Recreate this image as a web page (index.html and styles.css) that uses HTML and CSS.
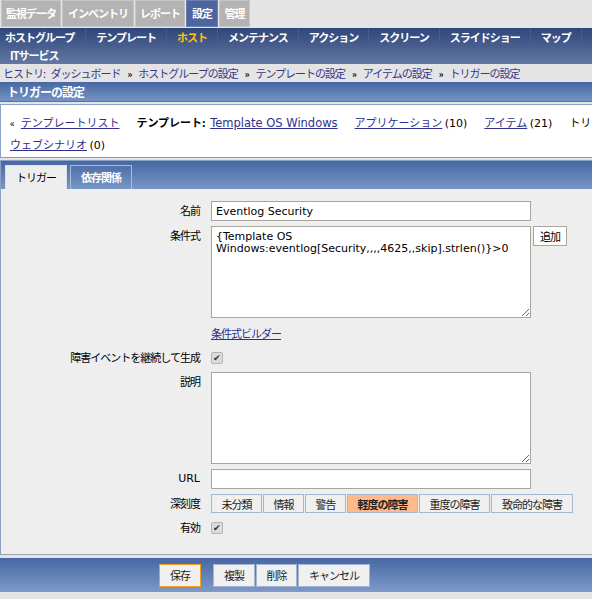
FILE: index.html
```html
<!DOCTYPE html>
<html lang="ja">
<head>
  <meta charset="UTF-8" />
  <title>トリガーの設定</title>
  <link rel="stylesheet" href="styles.css">
</head>
<body>

<div class="top-tabs">
  <span class="top-tab t1">監視データ</span>
  <span class="top-tab t2">インベントリ</span>
  <span class="top-tab t3">レポート</span>
  <span class="top-tab t4 activo">設定</span>
  <span class="top-tab t5">管理</span>
</div>

<ul class="menu-principal">
  <li>ホストグループ</li>
  <li>テンプレート</li>
  <li class="actual">ホスト</li>
  <li>メンテナンス</li>
  <li>アクション</li>
  <li>スクリーン</li>
  <li>スライドショー</li>
  <li>マップ</li>
  <li class="ultimo">ITサービス</li>
</ul>

<div class="historial">
  <span class="etiqueta">ヒストリ:</span>
  <a href="#">ダッシュボード</a><b>&raquo;</b><a href="#">ホストグループの設定</a><b>&raquo;</b><a href="#">テンプレートの設定</a><b>&raquo;</b><a href="#">アイテムの設定</a><b>&raquo;</b><a href="#">トリガーの設定</a>
</div>

<div class="titulo">トリガーの設定</div>

<div class="caja-info">
  <div class="linea-info">
    <span class="flecha">&laquo;</span><a href="#">テンプレートリスト</a>
    <span class="sep-info"></span>
    <b>テンプレート:</b> <a href="#" class="latino enlace-plantilla">Template OS Windows</a>
    <span class="sep-info"></span>
    <a href="#">アプリケーション</a> <span class="cuenta">(10)</span>
    <span class="sep-info"></span>
    <a href="#">アイテム</a> <span class="cuenta">(21)</span>
    <span class="sep-info"></span>
    <span>トリガー <span class="cuenta">(13)</span></span>
  </div>
  <div class="linea-info">
    <a href="#">ウェブシナリオ</a> <span class="cuenta">(0)</span>
  </div>
</div>

<div class="panel-form">
  <div class="pestanas">
    <span class="pestana activa">トリガー</span>
    <span class="pestana">依存関係</span>
  </div>

  <div class="cuerpo-form">
    <div class="fila">
      <label>名前</label>
      <div><input type="text" class="campo" value="Eventlog Security"></div>
    </div>
    <div class="fila">
      <label>条件式</label>
      <div class="con-boton">
        <textarea class="area">{Template OS Windows:eventlog[Security,,,,4625,,skip].strlen()}&gt;0</textarea>
        <button class="btn-agregar">追加</button>
      </div>
    </div>
    <div class="fila fila-enlace">
      <label></label>
      <div><a href="#">条件式ビルダー</a></div>
    </div>
    <div class="fila">
      <label>障害イベントを継続して生成</label>
      <div><span class="check">&#10004;</span></div>
    </div>
    <div class="fila">
      <label>説明</label>
      <div><textarea class="area"></textarea></div>
    </div>
    <div class="fila">
      <label class="latino">URL</label>
      <div><input type="text" class="campo"></div>
    </div>
    <div class="fila">
      <label>深刻度</label>
      <div class="severidad">
        <button class="w1">未分類</button>
        <button class="w2">情報</button>
        <button class="w3">警告</button>
        <button class="w4 elegido">軽度の障害</button>
        <button class="w5">重度の障害</button>
        <button class="w6">致命的な障害</button>
      </div>
    </div>
    <div class="fila">
      <label>有効</label>
      <div><span class="check">&#10004;</span></div>
    </div>
  </div>
</div>

<div class="pie">
  <button class="btn-guardar">保存</button>
  <button class="b-clon">複製</button>
  <button class="b-borrar">削除</button>
  <button class="b-cancelar">キャンセル</button>
</div>

</body>
</html>
```

FILE: styles.css
```css
body {
  margin: 0;
  width: 592px;
  overflow: hidden;
  background-color: #e4e4e4;
  color: #000;
  font-family: "Noto Sans CJK JP", sans-serif;
  font-size: 11px;
  letter-spacing: -1px;
}

a {
  color: #2f2f8f;
}

.latino {
  font-family: "DejaVu Sans", sans-serif;
  letter-spacing: 0;
}

/* pestañas superiores */
.top-tabs {
  display: flex;
  gap: 1px;
  height: 28px;
  padding-left: 1px;
}

.top-tab {
  box-sizing: border-box;
  height: 27px;
  line-height: 25px;
  text-align: center;
  color: white;
  font-weight: bold;
  background-color: #b3b3b3;
  border: 1px solid #c6c6c6;
}

.top-tab.activo {
  background-color: #4d66a0;
  border-color: #6b80b0;
}

.t1 { width: 60px; }
.t2 { width: 72px; }
.t3 { width: 50px; }
.t4 { width: 32px; }
.t5 { width: 31px; }

/* menú */
.menu-principal {
  list-style: none;
  margin: 0;
  padding: 1px 0 0 0;
  height: 35px;
  display: flex;
  flex-wrap: wrap;
  background: linear-gradient(#2f4679, #485e8f 50%, #6378a4);
}

.menu-principal li {
  height: 17px;
  line-height: 17px;
  padding: 0 10px 0 10px;
  color: white;
  font-weight: bold;
  border-right: 1px solid #4b5a88;
}

.menu-principal li:first-child {
  padding-left: 5px;
  padding-right: 11px;
}

.menu-principal .actual {
  color: #ffc600;
}

.menu-principal .ultimo {
  padding-left: 10px;
  border-right: none;
}

.historial {
  height: 18px;
  line-height: 18px;
  padding-left: 3px;
  white-space: nowrap;
  color: #36368a;
}

.historial .etiqueta {
  margin-right: 4px;
}

.historial a {
  color: #36368a;
  text-decoration: none;
}

.historial b {
  color: #000;
  font-size: 9px;
  margin: 0 7px 0 7px;
}

.titulo {
  height: 19px;
  line-height: 19px;
  padding-left: 7px;
  color: white;
  font-weight: bold;
  font-size: 12px;
  background: linear-gradient(#4767a4, #7593c3);
  border-bottom: 1px solid #5a72a3;
}

.caja-info {
  margin-top: 2px;
  height: 52px;
  background: white;
  border: 1px solid #8aa2c4;
  border-right: none;
  border-bottom: 1px solid #9a9a9a;
  overflow: hidden;
  letter-spacing: 0;
}

.linea-info {
  white-space: nowrap;
  padding-left: 9px;
  line-height: 21px;
}

.linea-info:first-child {
  margin-top: 7px;
}

.sep-info {
  display: inline-block;
  width: 12px;
}

.flecha {
  font-size: 10px;
  margin-right: 6px;
}

.enlace-plantilla {
  font-size: 11.5px;
  margin-left: 2px;
}

.cuenta {
  font-family: "DejaVu Sans", sans-serif;
  letter-spacing: 0;
}

/* formulario */
.panel-form {
  margin-top: 2px;
  border: 1px solid #8aa2c4;
  border-right: none;
  border-bottom: 1px solid #9aa4b0;
  background: #eeeeee;
}

.pestanas {
  height: 28px;
  display: flex;
  align-items: flex-end;
  gap: 3px;
  padding-left: 4px;
  background: linear-gradient(#4767a4, #7896c6);
}

.pestana {
  box-sizing: border-box;
  width: 62px;
  height: 24px;
  line-height: 23px;
  text-align: center;
  color: white;
  font-weight: bold;
  border: 1px solid #a8bcd8;
  border-bottom: none;
}

.pestana.activa {
  color: #000;
  font-weight: normal;
  background: #eeeeee;
  border-color: #d8e0ec;
}

.cuerpo-form {
  padding: 12px 0 17px 0;
  display: flex;
  flex-direction: column;
  gap: 5px;
}

.fila {
  display: grid;
  grid-template-columns: 199px 1fr;
  column-gap: 11px;
}

.fila label {
  text-align: right;
  line-height: 19px;
}

.fila-enlace {
  margin: 3px 0;
  line-height: 14px;
}

.campo {
  box-sizing: border-box;
  width: 320px;
  height: 20px;
  border: 1px solid #a8a69a;
  padding: 0 4px;
  font-family: "DejaVu Sans", sans-serif;
  font-size: 11px;
  letter-spacing: 0;
  background: white;
}

.area {
  box-sizing: border-box;
  display: block;
  width: 320px;
  height: 92px;
  border: 1px solid #a8a69a;
  padding: 4px 4px;
  font-family: "DejaVu Sans", sans-serif;
  font-size: 11px;
  line-height: 12px;
  letter-spacing: 0;
  background: white;
  resize: both;
}

.con-boton {
  display: flex;
  align-items: flex-start;
  gap: 2px;
}

.btn-agregar {
  height: 20px;
  width: 34px;
  padding: 0;
  background: white;
  border: 1px solid #a8a69a;
  font-family: inherit;
  font-size: 11px;
  letter-spacing: -1px;
}

.check {
  display: inline-block;
  box-sizing: border-box;
  margin-top: 4px;
  width: 12px;
  height: 12px;
  line-height: 10px;
  text-align: center;
  font-size: 9px;
  letter-spacing: 0;
  color: #333;
  background: #dcdcdc;
  border: 1px solid #b4b4b4;
  border-radius: 2px;
}

.severidad {
  display: flex;
  gap: 1px;
}

.severidad button {
  box-sizing: border-box;
  height: 19px;
  padding: 0;
  background: #f0f0f0;
  border: 1px solid #a3b6d2;
  font-family: inherit;
  font-size: 11px;
  letter-spacing: -1px;
  color: #222;
}

.severidad .w1 { width: 51px; }
.severidad .w2 { width: 41px; }
.severidad .w3 { width: 41px; }
.severidad .w4 { width: 71px; }
.severidad .w5 { width: 71px; }
.severidad .w6 { width: 82px; }

.severidad .elegido {
  background: #ffb98a;
  font-weight: bold;
}

/* barra inferior */
.pie {
  margin-top: 3px;
  height: 34px;
  display: flex;
  align-items: center;
  padding-left: 159px;
  gap: 1px;
  background: linear-gradient(#4767a4, #7f9ac8);
}

.pie button {
  box-sizing: border-box;
  height: 23px;
  padding: 0;
  background: #f0f0f0;
  border: 1px solid #a3b6d2;
  font-family: inherit;
  font-size: 11px;
  letter-spacing: -1px;
  color: #222;
}

.pie .btn-guardar {
  width: 42px;
  border-color: #f5a020;
  margin-right: 11px;
}

.b-clon { width: 42px; }
.b-borrar { width: 41px; }
.b-cancelar { width: 72px; }
```
